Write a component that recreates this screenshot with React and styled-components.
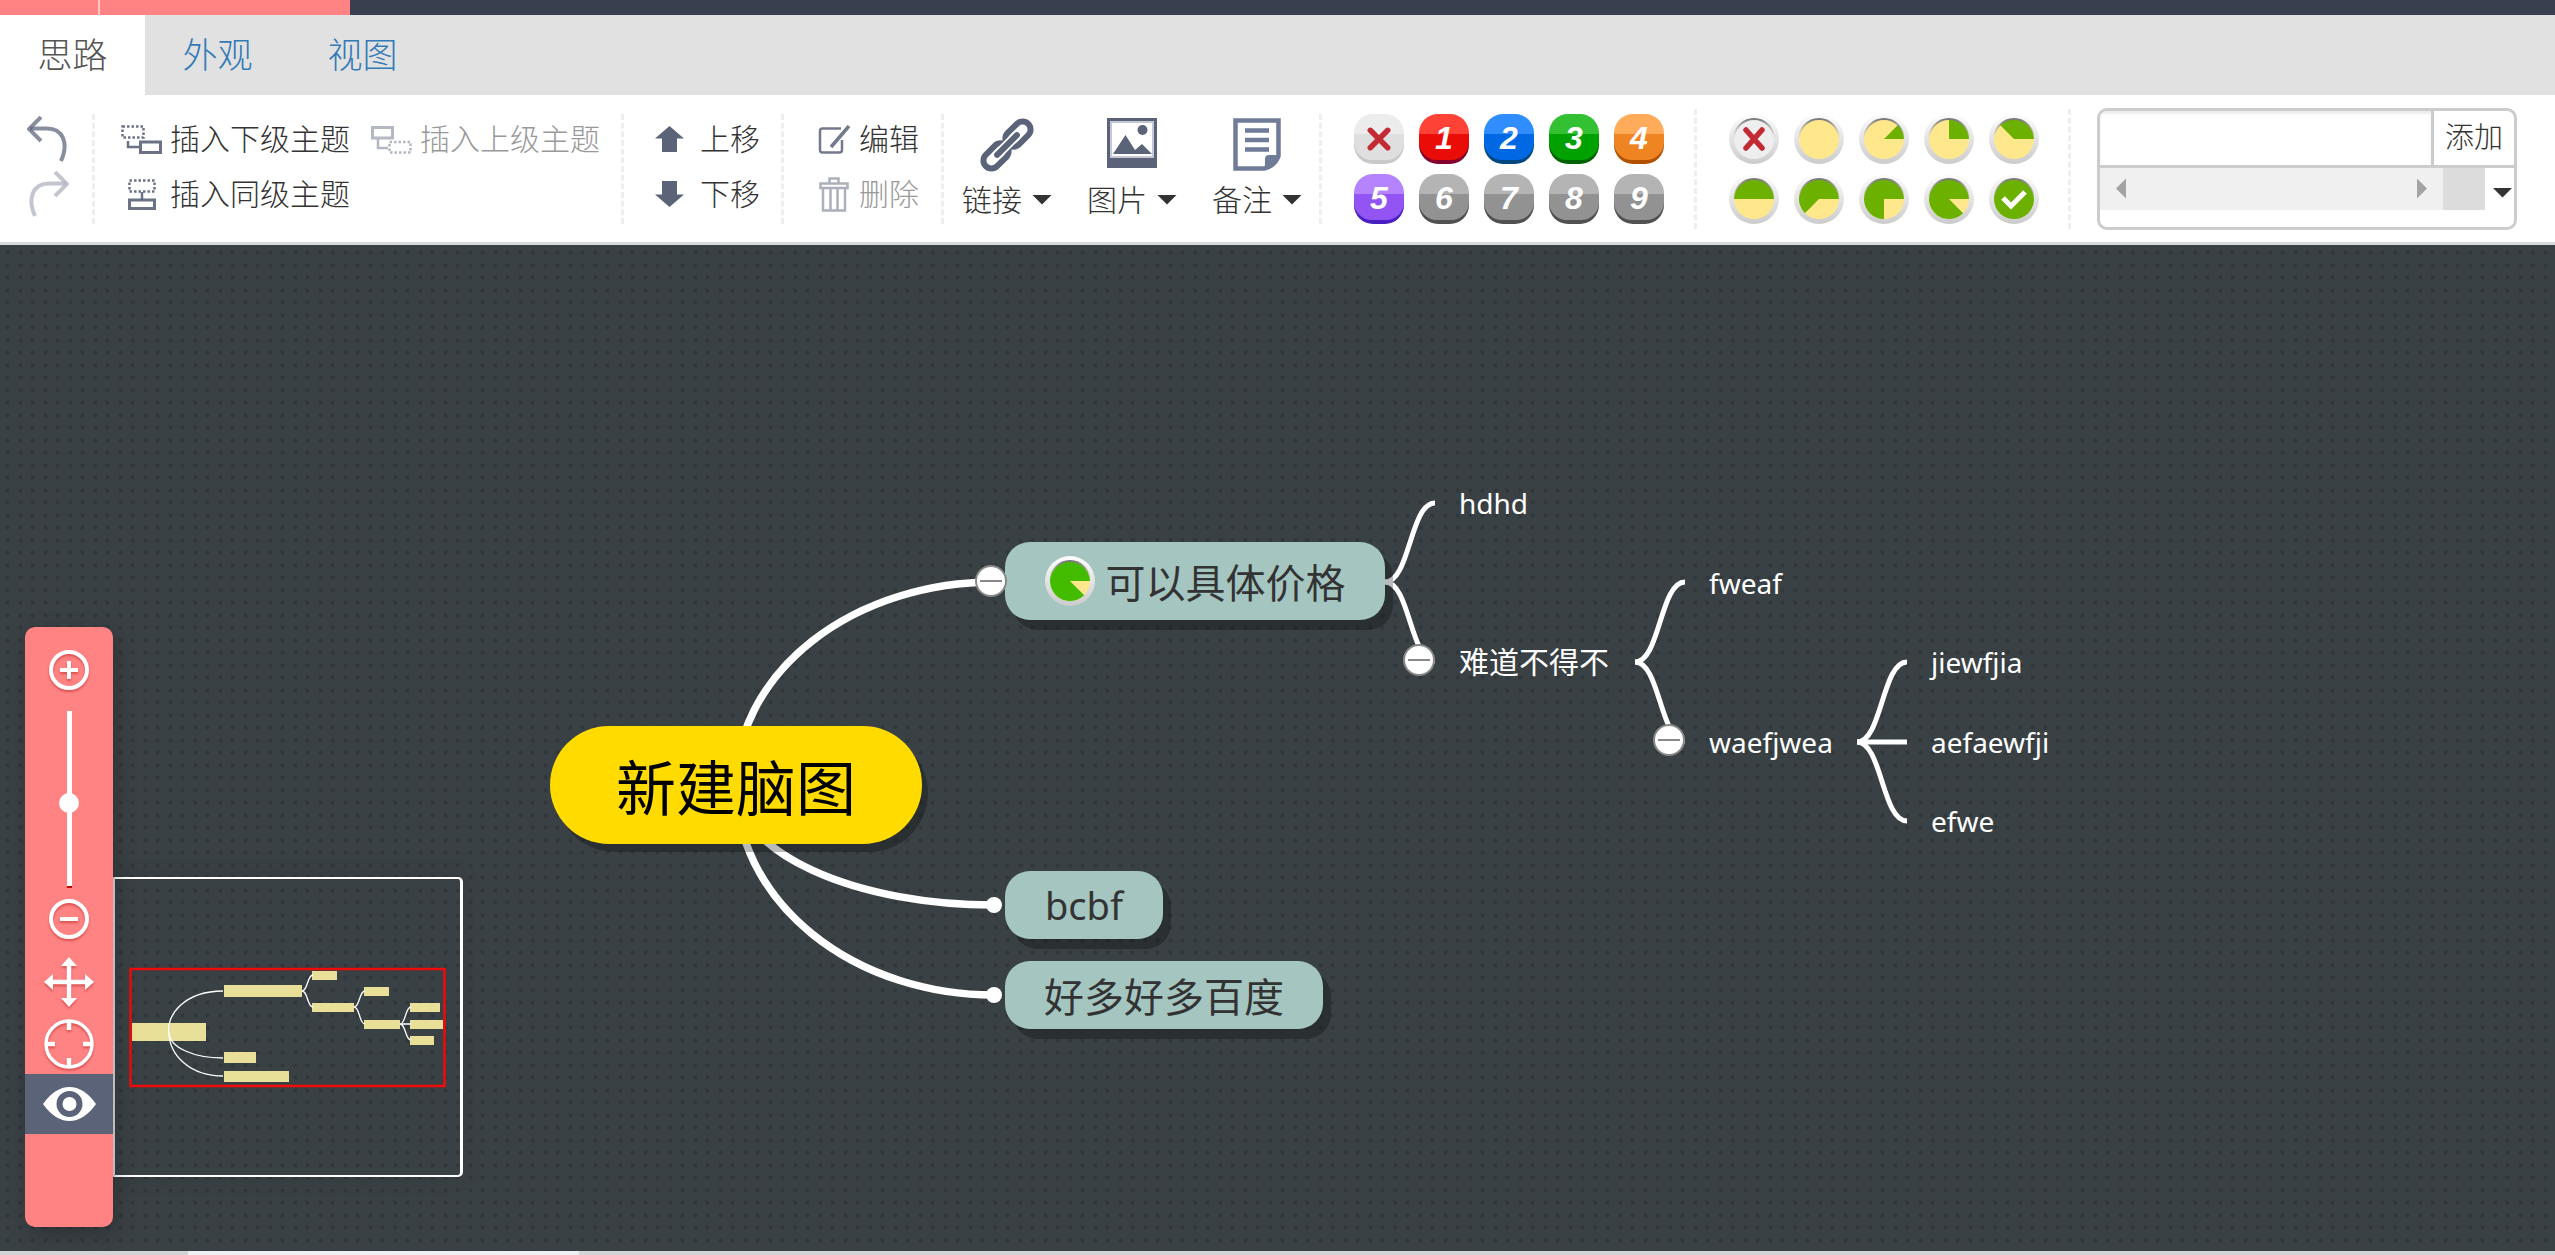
import React from "react";
import styled, { createGlobalStyle, css } from "styled-components";

const FONT = '"Noto Sans", "Noto Sans CJK SC", sans-serif';
const INK = "#5b6379";

const GlobalStyle = createGlobalStyle`
  *, *::before, *::after { box-sizing: border-box; }
  body { margin: 0; background: #3a4144; font-family: ${FONT}; color: #333; }
  button, input { font-family: inherit; color: inherit; }
  button { border: 0; padding: 0; background: none; cursor: pointer; }
`;

const Page = styled.div`
  display: flex;
  flex-direction: column;
  min-height: 100vh;
  overflow: hidden;
`;

/* ---------- header ---------- */

const TopBar = styled.div`
  display: flex;
  height: 15px;
  background: #3a3f50;
`;

const TopItem = styled.div`
  width: ${(p) => p.$width}px;
  background: #ff8383;
  & + & { border-left: 2px solid #ffc4c4; }
`;

const Tabs = styled.nav`
  display: flex;
  height: 80px;
  background: #e1e1e1;
`;

const Tab = styled.a`
  display: flex;
  align-items: center;
  justify-content: center;
  width: 145px;
  font-size: 35px;
  font-weight: 300;
  line-height: 48px;
  text-decoration: none;
  color: ${(p) => (p.$active ? "#555" : "#337ab7")};
  background: ${(p) => (p.$active ? "#fff" : "transparent")};
`;

const Toolbar = styled.div`
  display: flex;
  align-items: center;
  height: 150px;
  background: #fff;
  border-bottom: 3px solid #d6dada;
`;

const Group = styled.div`
  display: flex;
  align-items: center;
  height: ${(p) => p.$height || 110}px;
  padding: 0 ${(p) => p.$right}px 0 ${(p) => p.$left}px;
  border-right: 3px dashed #eee;
`;

const Stack = styled.div`
  display: flex;
  flex-direction: column;
`;

const Row = styled.div`
  display: flex;
  align-items: center;
  gap: 21px;
  height: 55px;
  padding-bottom: 4px;
`;

const ToolButton = styled.button`
  display: flex;
  align-items: center;
  gap: ${(p) => p.$gap || 8}px;
  font-size: 30px;
  font-weight: 300;
  line-height: 40px;
  white-space: nowrap;
  &:disabled { color: #999; cursor: default; }
  &:disabled svg { opacity: 0.5; }
`;

const IconBox = styled.span`
  display: flex;
  align-items: center;
  justify-content: center;
  width: ${(p) => p.$width}px;
`;

const MenuButtons = styled.div`
  display: flex;
  gap: 35px;
`;

const MenuButton = styled.button`
  display: flex;
  flex-direction: column;
  align-items: center;
  width: 90px;
  height: 110px;
  padding-top: 4px;
`;

const MenuIcon = styled.span`
  display: flex;
  align-items: flex-start;
  justify-content: center;
  height: 60px;
`;

const MenuLabel = styled.span`
  display: flex;
  align-items: center;
  gap: 10px;
  font-size: 30px;
  font-weight: 300;
  line-height: 44px;
`;

const Caret = styled.span`
  width: 20px;
  height: 10px;
  background: #333;
  clip-path: polygon(0 0, 100% 0, 50% 100%);
`;

const IconGrid = styled.div`
  display: grid;
  grid-template-columns: repeat(5, 50px);
  gap: 10px 15px;
`;

const PriorityButton = styled.button`
  display: block;
  width: 50px;
  height: 50px;
  border-radius: 19px;
  background: linear-gradient(${(p) => p.$tone.light} 25px, ${(p) => p.$tone.base} 25px);
  overflow: hidden;
`;

const PriorityFace = styled.span`
  display: flex;
  align-items: center;
  justify-content: center;
  height: 43px;
  border-radius: 18px;
  background: linear-gradient(${(p) => p.$tone.light} 17px, ${(p) => p.$tone.face} 17px);
  color: #fff;
  font: italic bold 32px/43px "Liberation Sans", sans-serif;
`;

const ProgressButton = styled.button`
  display: block;
  width: 50px;
  height: 50px;
  svg { display: block; }
`;

const ResourcePanel = styled.form`
  width: 420px;
  height: 122px;
  margin-left: 26px;
  border: 3px solid #ccc;
  border-radius: 10px;
  overflow: hidden;
`;

const ResourceEntry = styled.div`
  display: flex;
  height: 57px;
  border-bottom: 3px solid #ccc;
`;

const ResourceInput = styled.input`
  flex: 1;
  min-width: 0;
  border: 0;
  border-right: 3px solid #ccc;
  padding: 0 12px;
  font-size: 30px;
  outline: 0;
  box-shadow: inset 0 3px 3px rgba(0, 0, 0, 0.08);
`;

const AddButton = styled.button`
  width: 80px;
  font-size: 29px;
  font-weight: 300;
  line-height: 40px;
  padding-bottom: 2px;
`;

const ResourceList = styled.div`
  display: flex;
  height: 42px;
`;

const Scroller = styled.div`
  display: flex;
  flex: 1;
  align-items: center;
  justify-content: space-between;
  padding: 0 16px;
  background: #f0f0f0;
`;

const ScrollArrow = styled.button`
  width: 10px;
  height: 20px;
  background: #a3a3a3;
  clip-path: ${(p) =>
    p.$dir === "left" ? "polygon(100% 0, 100% 100%, 0 50%)" : "polygon(0 0, 100% 50%, 0 100%)"};
`;

const ScrollCorner = styled.div`
  width: 42px;
  background: #dcdcdc;
`;

const MoreButton = styled.button`
  display: flex;
  align-items: center;
  justify-content: center;
  width: 29px;
  padding: 8px 0 0 6px;
`;

/* ---------- canvas ---------- */

const dot = "radial-gradient(circle, #30373a 1px, rgba(48, 55, 58, 0) 3px)";

const Canvas = styled.main`
  position: relative;
  flex: 1;
  background-color: #3a4144;
  background-image: ${dot}, ${dot}, ${dot}, ${dot};
  background-size: 25px 25px;
  background-position: -5px -5px, 8px -5px, -5px 8px, 8px 8px;
`;

const Links = styled.svg`
  position: absolute;
  inset: 0;
  width: 100%;
  height: 100%;
`;

const TopicBox = styled.div`
  position: absolute;
  left: ${(p) => p.$x}px;
  top: ${(p) => p.$y}px;
  display: flex;
  align-items: center;
  justify-content: center;
  gap: 11px;
  width: ${(p) => p.$w}px;
  height: ${(p) => p.$h}px;
  white-space: nowrap;
  font-size: ${(p) => p.$size}px;
  ${(p) =>
    p.$kind === "root" &&
    css`
      color: #000;
      background: #ffdb00;
      border-radius: 59px;
      box-shadow: 6px 8px 0 rgba(0, 0, 0, 0.27);
    `}
  ${(p) =>
    p.$kind === "main" &&
    css`
      background: #a4c5c0;
      border-radius: 25px;
      box-shadow: 8px 10px 0 rgba(0, 0, 0, 0.27);
    `}
  ${(p) =>
    p.$kind === "sub" &&
    css`
      color: #fff;
      justify-content: flex-start;
    `}
`;

const Collapse = styled.button`
  position: absolute;
  left: ${(p) => p.$x - 16}px;
  top: ${(p) => p.$y - 16}px;
  display: flex;
  align-items: center;
  justify-content: center;
  width: 32px;
  height: 32px;
  border: 2px solid #888;
  border-radius: 50%;
  background: #fff;
  &::before {
    content: "";
    width: 22px;
    height: 2px;
    background: #888;
  }
`;

const Navigator = styled.aside`
  position: absolute;
  left: 25px;
  bottom: 24px;
  display: flex;
  flex-direction: column;
  align-items: center;
  width: 88px;
  height: 600px;
  padding-top: 22px;
  border-radius: 10px;
  background: #ff8383;
  box-shadow: 3px 6px 20px rgba(0, 0, 0, 0.25);
`;

const NavButton = styled.button`
  display: flex;
  align-items: center;
  justify-content: center;
  width: 100%;
  height: ${(p) => p.$height}px;
  background: ${(p) => (p.$active ? "#5b6379" : "transparent")};
  svg {
    overflow: visible;
    filter: ${(p) => (p.$active ? "none" : "drop-shadow(0 2px 1px rgba(190, 40, 40, 0.55))")};
  }
`;

const ZoomSlider = styled.input`
  appearance: none;
  writing-mode: vertical-lr;
  direction: rtl;
  width: 20px;
  height: 177px;
  margin: 20px 0 0;
  background:
    linear-gradient(#fff, #fff) center top / 5px 175px no-repeat,
    linear-gradient(#c00, #c00) center bottom / 5px 2px no-repeat;
  &::-webkit-slider-thumb {
    appearance: none;
    width: 20px;
    height: 20px;
    border-radius: 50%;
    background: #fff;
  }
`;

const Preview = styled.div`
  position: absolute;
  left: 113px;
  bottom: 74px;
  width: 350px;
  height: 300px;
  border: 2px solid #fff;
  border-left-color: #ddd;
  border-right-width: 3px;
  border-radius: 0 5px 5px 0;
  box-shadow: 0 0 20px rgba(0, 0, 0, 0.12);
  svg { display: block; }
`;

const Footer = styled.div`
  display: flex;
  height: 4px;
  background: #d3d5d4;
  padding-left: 188px;
`;

const FooterTab = styled.div`
  width: 391px;
  background: #eef0f1;
`;

/* ---------- icons ---------- */

const UndoIcon = ({ flip }) => (
  <svg width="42" height="46" viewBox="0 0 42 46" fill="none" stroke={INK} strokeOpacity=".72" strokeWidth="4"
    transform={flip ? "scale(-1 1)" : undefined}>
    <path d="M14 1 2 13 14 25" />
    <path d="M3 12.5H20C36 12.5 42 27 34 45" />
  </svg>
);

const ChildIcon = () => (
  <svg width="41" height="29" fill="none" stroke={INK} strokeOpacity=".9" strokeWidth="2.5">
    <rect x="1.5" y="1.5" width="21" height="11" strokeDasharray="2.5 2" />
    <path d="M7 16V22H18" />
    <rect x="19.5" y="17" width="20" height="10.5" strokeWidth="3" />
  </svg>
);

const ParentIcon = () => (
  <svg width="41" height="29" fill="none" stroke={INK} strokeOpacity=".9" strokeWidth="2.5">
    <rect x="1.5" y="2.5" width="20" height="10.5" strokeWidth="3" />
    <path d="M7 14V23H17" />
    <rect x="18.5" y="17" width="21" height="10.5" strokeDasharray="2.5 2" />
  </svg>
);

const SiblingIcon = () => (
  <svg width="28" height="31" fill="none" stroke={INK} strokeOpacity=".9" strokeWidth="2.5">
    <rect x="1.5" y="1.5" width="25" height="11" strokeDasharray="2.5 2" />
    <path d="M14 13V21" />
    <rect x="1.5" y="21" width="25" height="8.5" strokeWidth="3" />
  </svg>
);

const ArrowIcon = ({ down }) => (
  <svg width="29" height="26" transform={down ? "scale(1 -1)" : undefined}>
    <path d="M14.5 0 29 12.5H22V26H7V12.5H0Z" fill={INK} />
  </svg>
);

const EditIcon = () => (
  <svg width="33" height="29" fill="none" stroke={INK} strokeOpacity=".85">
    <path d="M23 3.5H4.5Q2 3.5 2 6V25Q2 27.5 4.5 27.5H21.5Q24 27.5 24 25V15" strokeWidth="2.5" />
    <path d="M31 1 13 22" strokeWidth="3.5" />
  </svg>
);

const TrashIcon = () => (
  <svg width="30" height="35" fill="none" stroke={INK} strokeWidth="2.5">
    <path d="M10.5 6V1.5H19.5V6" />
    <rect x="1.5" y="6.5" width="27" height="4.5" />
    <path d="M4 11V33.5H26V11M11.5 12V33M18.5 12V33" />
  </svg>
);

const LinkIcon = () => (
  <svg width="54" height="54" viewBox="0 0 54 54" fill="none">
    <g transform="rotate(-45 27 27)">
      <rect x="-3" y="19" width="29" height="16" rx="8" stroke={INK} strokeWidth="6" />
      <rect x="28" y="19" width="29" height="16" rx="8" stroke={INK} strokeWidth="6" />
      <path d="M12 27H42" stroke="#fff" strokeWidth="9.5" />
      <path d="M13 27H41" stroke={INK} strokeWidth="6" strokeLinecap="round" />
    </g>
  </svg>
);

const ImageIcon = () => (
  <svg width="50" height="51">
    <rect width="50" height="50" fill={INK} />
    <rect x="3" y="3" width="44" height="37" fill="#c4c8d2" />
    <rect x="5" y="5" width="40" height="33" fill="#fff" />
    <path d="M6 36 18.5 17 28 32 35 26 45 36Z" fill={INK} />
    <circle cx="35.5" cy="12" r="5" fill={INK} />
  </svg>
);

const NoteIcon = () => (
  <svg width="48" height="53" fill="none" stroke="#6f7b97">
    <path d="M2.5 2.5H45.5V38Q42 48 31 50.5H2.5Z" strokeWidth="4.5" />
    <path d="M45 38H36Q33 38 33 41V50Q43 47 45 38Z" fill="#6f7b97" strokeWidth="2" />
    <path d="M12 12.5H36M12 22H36M12 31.5H36" strokeWidth="4.5" />
  </svg>
);

const CrossIcon = ({ size = 22 }) => (
  <svg width={size} height={size} viewBox="0 0 22 22">
    <path d="M3 3 19 19M19 3 3 19" stroke="#c22b33" strokeWidth="5" strokeLinecap="round" />
  </svg>
);

const pie = (eighths) => {
  const a = (eighths * Math.PI) / 4;
  const x = 25 + 20 * Math.cos(a);
  const y = 25 - 20 * Math.sin(a);
  return `M25 25H45A20 20 0 ${eighths > 4 ? 1 : 0} 0 ${x} ${y}Z`;
};

const ProgressIcon = ({ value, id, green = "#6cb100" }) => (
  <svg width="50" height="50">
    <defs>
      <linearGradient id={`ring-${id}`} x1="0" y1="0" x2="0" y2="1">
        <stop offset="0" stopColor="#fdfdfd" />
        <stop offset="1" stopColor="#cbcbcb" />
      </linearGradient>
      <linearGradient id={`rim-${id}`} x1="0" y1="0" x2="0" y2="1">
        <stop offset="0" stopColor="#777" />
        <stop offset=".5" stopColor="#bbb" stopOpacity="0" />
      </linearGradient>
    </defs>
    <circle cx="25" cy="25" r="25" fill={`url(#ring-${id})`} />
    <circle cx="25" cy="25" r="20" fill={value === null ? "#eee" : value === 8 ? green : "#ffe88c"} />
    {value > 0 && value < 8 && <path d={pie(value)} fill={green} />}
    <circle cx="25" cy="25" r="20" fill="none" stroke={`url(#rim-${id})`} strokeWidth="2" />
    {value === null && (
      <path d="M17 16 33 34M33 16 17 34" stroke="#c22b33" strokeWidth="5.5" strokeLinecap="round" />
    )}
    {value === 8 && <path d="M14 24 22 32 36 18" fill="none" stroke="#fff" strokeWidth="5" />}
  </svg>
);

const ZoomIcon = ({ plus }) => (
  <svg width="40" height="40" fill="none" stroke="#fff">
    <circle cx="20" cy="20" r="18" strokeWidth="4" />
    <path d={plus ? "M11 20H29M20 11V29" : "M11 20H29"} strokeWidth="4" />
  </svg>
);

const MoveIcon = () => (
  <svg width="50" height="50" viewBox="0 0 50 50">
    <path d="M25 5V45M5 25H45" stroke="#fff" strokeWidth="4.5" />
    <path d="M25 0 33 9H17ZM25 50 33 41H17ZM0 25 9 17V33ZM50 25 41 17V33Z" fill="#fff" />
  </svg>
);

const TargetIcon = () => (
  <svg width="50" height="50" fill="none" stroke="#fff">
    <circle cx="25" cy="25" r="23" strokeWidth="3.5" />
    <path d="M25 2V11M25 39V48M2 25H11M39 25H48" strokeWidth="4.5" />
  </svg>
);

const EyeIcon = () => (
  <svg width="53" height="36">
    <path d="M0 18Q12 1 26.5 1T53 18Q41 35 26.5 35T0 18Z" fill="#fff" />
    <circle cx="26.5" cy="18" r="10" fill="none" stroke="#5b6379" strokeWidth="6" />
  </svg>
);

/* ---------- data ---------- */

const GREY = { base: "#515151", face: "#929292", light: "#b4b4b4" };
const PRIORITIES = [
  { label: "", base: "#c9c9c9", face: "#dfdfdf", light: "#ececec" },
  { label: "1", base: "#84002a", face: "#e90c07", light: "#ff4236" },
  { label: "2", base: "#00467f", face: "#0068e2", light: "#2f8dff" },
  { label: "3", base: "#006300", face: "#00a100", light: "#33c033" },
  { label: "4", base: "#b35000", face: "#ef8522", light: "#ffab59" },
  { label: "5", base: "#4a1fc2", face: "#9254f3", light: "#b683ff" },
  ...["6", "7", "8", "9"].map((label) => ({ label, ...GREY })),
];
const PROGRESS = [null, 0, 1, 2, 3, 4, 5, 6, 7, 8];

const TOPICS = [
  { text: "新建脑图", kind: "root", x: 550, cy: 540, w: 372, h: 118, size: 60 },
  { text: "可以具体价格", kind: "main", x: 1005, cy: 336, w: 380, h: 78, size: 40, progress: 7 },
  { text: "bcbf", kind: "main", x: 1005, cy: 660, w: 158, h: 68, size: 38 },
  { text: "好多好多百度", kind: "main", x: 1005, cy: 750, w: 318, h: 68, size: 40 },
  { text: "hdhd", kind: "sub", x: 1459, cy: 258, size: 28 },
  { text: "难道不得不", kind: "sub", x: 1459, cy: 415, size: 30 },
  { text: "fweaf", kind: "sub", x: 1709, cy: 338, size: 28 },
  { text: "waefjwea", kind: "sub", x: 1709, cy: 497, size: 28 },
  { text: "jiewfjia", kind: "sub", x: 1931, cy: 417, size: 28 },
  { text: "aefaewfji", kind: "sub", x: 1931, cy: 497, size: 28 },
  { text: "efwe", kind: "sub", x: 1931, cy: 576, size: 28 },
];

const ARCS = [337, 660, 750];
const CURVES = [
  [1385, 337, 258],
  [1385, 337, 416],
  [1635, 417, 337],
  [1635, 417, 496],
  [1857, 497, 417],
  [1857, 497, 497],
  [1857, 497, 576],
];
const COLLAPSERS = [[991, 336], [1419, 415], [1669, 495]];

const arc = (y) => `M736 540A258 ${Math.abs(y - 540)} 0 0 ${y < 540 ? 1 : 0} 994 ${y}`;
const curve = ([x, y, to]) => `M${x} ${y}C${x + 25} ${y} ${x + 25} ${to} ${x + 50} ${to}`;

const MINI_TOPICS = [
  [17, 143, 74, 18], [109, 105, 78, 12], [109, 172, 32, 11], [109, 191, 65, 11],
  [197, 91, 25, 9], [197, 123, 42, 9], [249, 107, 25, 9], [249, 140, 36, 9],
  [295, 123, 30, 9], [295, 140, 33, 9], [295, 156, 24, 9],
];
const MINI_LINKS =
  "M54 155C50 135 70 111 108 111M54 152C54 168 80 178 108 178M54 152C54 176 76 196 108 196" +
  "M187 111C193 111 192 95 198 95M187 111C193 111 192 127 198 127" +
  "M239 127C245 127 244 111 250 111M239 127C245 127 244 144 250 144" +
  "M285 144C291 144 290 127 296 127M285 144H296M285 144C291 144 290 160 296 160";

/* ---------- app ---------- */

export default function App() {
  return (
    <Page>
      <GlobalStyle />
      <TopBar>
        <TopItem $width={98} />
        <TopItem $width={252} />
      </TopBar>
      <Tabs>
        <Tab href="#idea" $active>思路</Tab>
        <Tab href="#look">外观</Tab>
        <Tab href="#view">视图</Tab>
      </Tabs>

      <Toolbar>
        <Group $left={27} $right={23}>
          <Stack>
            <Row><ToolButton aria-label="撤销"><UndoIcon /></ToolButton></Row>
            <Row><ToolButton aria-label="重做" disabled><UndoIcon flip /></ToolButton></Row>
          </Stack>
        </Group>

        <Group $left={26} $right={21}>
          <Stack>
            <Row>
              <ToolButton><IconBox $width={41}><ChildIcon /></IconBox>插入下级主题</ToolButton>
              <ToolButton disabled><IconBox $width={41}><ParentIcon /></IconBox>插入上级主题</ToolButton>
            </Row>
            <Row>
              <ToolButton><IconBox $width={41}><SiblingIcon /></IconBox>插入同级主题</ToolButton>
            </Row>
          </Stack>
        </Group>

        <Group $left={31} $right={21}>
          <Stack>
            <Row><ToolButton $gap={16}><ArrowIcon />上移</ToolButton></Row>
            <Row><ToolButton $gap={16}><ArrowIcon down />下移</ToolButton></Row>
          </Stack>
        </Group>

        <Group $left={33} $right={22}>
          <Stack>
            <Row><ToolButton><IconBox $width={34}><EditIcon /></IconBox>编辑</ToolButton></Row>
            <Row><ToolButton disabled><IconBox $width={34}><TrashIcon /></IconBox>删除</ToolButton></Row>
          </Stack>
        </Group>

        <Group $left={18} $right={17}>
          <MenuButtons>
            <MenuButton><MenuIcon><LinkIcon /></MenuIcon><MenuLabel>链接<Caret /></MenuLabel></MenuButton>
            <MenuButton><MenuIcon><ImageIcon /></MenuIcon><MenuLabel>图片<Caret /></MenuLabel></MenuButton>
            <MenuButton><MenuIcon><NoteIcon /></MenuIcon><MenuLabel>备注<Caret /></MenuLabel></MenuButton>
          </MenuButtons>
        </Group>

        <Group $left={32} $right={30} $height={120}>
          <IconGrid>
            {PRIORITIES.map((p) => (
              <PriorityButton key={p.label} $tone={p} aria-label={`优先级 ${p.label}`}>
                <PriorityFace $tone={p}>{p.label || <CrossIcon size={24} />}</PriorityFace>
              </PriorityButton>
            ))}
          </IconGrid>
        </Group>

        <Group $left={32} $right={29} $height={120}>
          <IconGrid>
            {PROGRESS.map((value, i) => (
              <ProgressButton key={i} aria-label={`进度 ${i}`}>
                <ProgressIcon value={value} id={i} />
              </ProgressButton>
            ))}
          </IconGrid>
        </Group>

        <ResourcePanel onSubmit={(e) => e.preventDefault()}>
          <ResourceEntry>
            <ResourceInput type="text" aria-label="资源" />
            <AddButton>添加</AddButton>
          </ResourceEntry>
          <ResourceList>
            <Scroller>
              <ScrollArrow type="button" $dir="left" aria-label="向左" />
              <ScrollArrow type="button" $dir="right" aria-label="向右" />
            </Scroller>
            <ScrollCorner />
            <MoreButton type="button" aria-label="更多"><Caret /></MoreButton>
          </ResourceList>
        </ResourcePanel>
      </Toolbar>

      <Canvas>
        <Links fill="none" stroke="#fff">
          {ARCS.map((y) => <path key={y} d={arc(y)} strokeWidth="7.5" />)}
          {CURVES.map((c, i) => <path key={i} d={curve(c)} strokeWidth="5" />)}
          <circle cx="994" cy="660" r="8" fill="#fff" stroke="none" />
          <circle cx="994" cy="750" r="8" fill="#fff" stroke="none" />
        </Links>

        {TOPICS.map((t) => {
          const h = t.h || 40;
          return (
            <TopicBox key={t.text} $kind={t.kind} $x={t.x} $y={t.cy - h / 2} $w={t.w} $h={h} $size={t.size}>
              {t.progress && <ProgressIcon value={t.progress} id="topic" green="#43bc00" />}
              <span>{t.text}</span>
            </TopicBox>
          );
        })}
        {COLLAPSERS.map(([x, y]) => <Collapse key={x} $x={x} $y={y} aria-label="收起" />)}

        <Preview>
          <svg width="345" height="296">
            <g transform="translate(0 1)">
              {MINI_TOPICS.map(([x, y, w, h], i) => (
                <rect key={i} x={x} y={y} width={w} height={h} fill="#e8df98" />
              ))}
              <path d={MINI_LINKS} fill="none" stroke="#fff" strokeWidth="1.3" />
            </g>
            <rect x="15.5" y="90" width="314" height="117" fill="none" stroke="#f00a0a" strokeWidth="2.5" />
          </svg>
        </Preview>

        <Navigator>
          <NavButton $height={42} aria-label="放大"><ZoomIcon plus /></NavButton>
          <ZoomSlider type="range" min="0" max="100" defaultValue="48" aria-label="缩放" />
          <NavButton $height={62} aria-label="缩小"><ZoomIcon /></NavButton>
          <NavButton $height={64} aria-label="移动"><MoveIcon /></NavButton>
          <NavButton $height={60} aria-label="定位"><TargetIcon /></NavButton>
          <NavButton $height={60} $active aria-label="预览"><EyeIcon /></NavButton>
        </Navigator>
      </Canvas>
      <Footer><FooterTab /></Footer>
    </Page>
  );
}
